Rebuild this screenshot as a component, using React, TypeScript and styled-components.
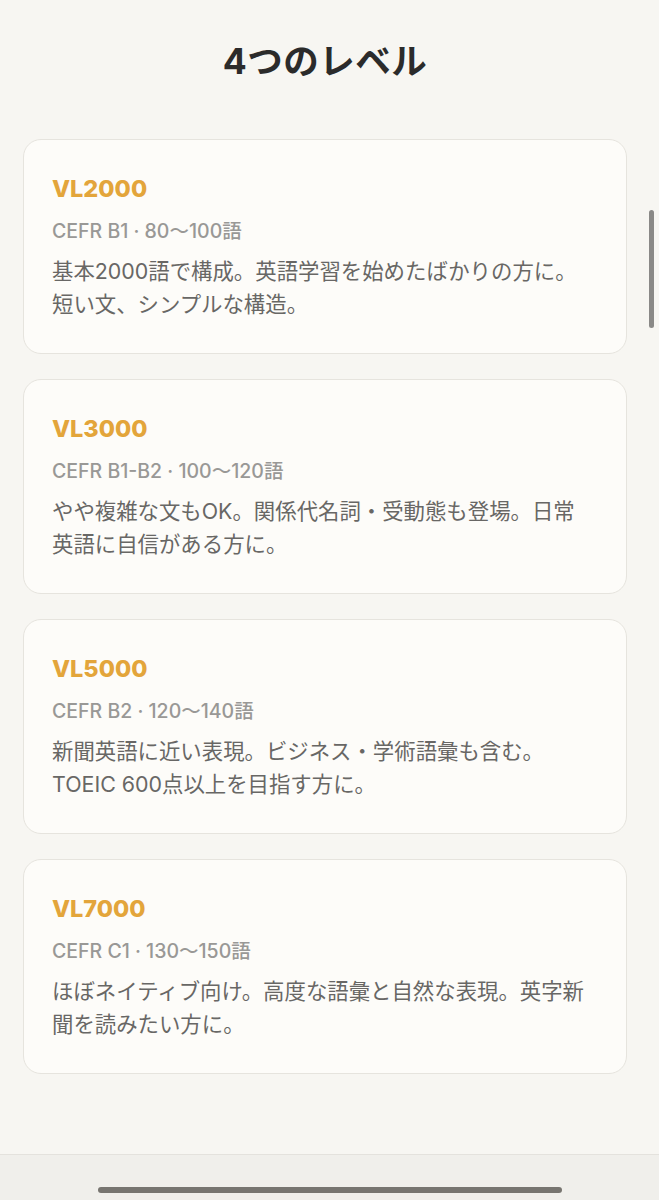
import styled, { createGlobalStyle } from "styled-components";

const GlobalStyle = createGlobalStyle`
  html, body {
    margin: 0;
    padding: 0;
    background: #f7f6f2;
  }
  body {
    font-family: "Inter", "Noto Sans CJK JP", sans-serif;
    -webkit-font-smoothing: antialiased;
  }
  * {
    box-sizing: border-box;
  }
`;

const Screen = styled.div`
  position: relative;
  display: flex;
  flex-direction: column;
  height: 1200px;
  overflow: hidden;
  background: #f7f6f2;
`;

const Main = styled.main`
  flex: 1;
  padding: 0 32px 0 23px;
`;

const Title = styled.h1`
  margin: 0;
  padding: 40px 0 55px;
  text-align: center;
  font-size: 35.5px;
  line-height: 44px;
  font-weight: 700;
  color: #2b2b2b;
  letter-spacing: 0.5px;
`;

const LevelList = styled.ul`
  list-style: none;
  margin: 0;
  padding: 0;
  display: flex;
  flex-direction: column;
  gap: 25px;
`;

const Card = styled.li`
  height: 215px;
  padding: 35px 28px 0;
  background: #fdfcf9;
  border: 1px solid #e6e4de;
  border-radius: 18px;
`;

const LevelName = styled.h2`
  margin: 0;
  font-size: 23.5px;
  line-height: 28px;
  font-weight: 800;
  color: #e3a53b;
`;

const Meta = styled.div`
  margin-top: 14px;
  font-size: 19.5px;
  line-height: 28px;
  font-weight: 500;
  color: #999896;
`;

const Description = styled.p`
  margin: 10px 0 0;
  font-size: 21.4px;
  line-height: 33px;
  color: #686765;
`;

const Footer = styled.footer`
  height: 46px;
  border-top: 1px solid #e4e2dd;
  background: #f0efeb;
  display: flex;
  justify-content: center;
  align-items: flex-end;
  padding-bottom: 7px;
`;

const HomeIndicator = styled.div`
  width: 464px;
  height: 6px;
  border-radius: 3px;
  background: #777570;
`;

const ScrollThumb = styled.div`
  position: absolute;
  top: 210px;
  right: 5px;
  width: 5px;
  height: 118px;
  border-radius: 3px;
  background: #8a8987;
`;

interface ILevel {
  name: string;
  meta: string;
  lines: string[];
}

const levels: ILevel[] = [
  {
    name: "VL2000",
    meta: "CEFR B1 · 80〜100語",
    lines: ["基本2000語で構成。英語学習を始めたばかりの方に。", "短い文、シンプルな構造。"],
  },
  {
    name: "VL3000",
    meta: "CEFR B1-B2 · 100〜120語",
    lines: ["やや複雑な文もOK。関係代名詞・受動態も登場。日常", "英語に自信がある方に。"],
  },
  {
    name: "VL5000",
    meta: "CEFR B2 · 120〜140語",
    lines: ["新聞英語に近い表現。ビジネス・学術語彙も含む。", "TOEIC 600点以上を目指す方に。"],
  },
  {
    name: "VL7000",
    meta: "CEFR C1 · 130〜150語",
    lines: ["ほぼネイティブ向け。高度な語彙と自然な表現。英字新", "聞を読みたい方に。"],
  },
];

function App() {
  return (
    <>
      <GlobalStyle />
      <Screen>
        <Main>
          <Title>4つのレベル</Title>
          <LevelList>
            {levels.map((level) => (
              <Card key={level.name}>
                <LevelName>{level.name}</LevelName>
                <Meta>{level.meta}</Meta>
                <Description>
                  {level.lines[0]}
                  <br />
                  {level.lines[1]}
                </Description>
              </Card>
            ))}
          </LevelList>
        </Main>
        <Footer>
          <HomeIndicator />
        </Footer>
        <ScrollThumb />
      </Screen>
    </>
  );
}

export default App;
